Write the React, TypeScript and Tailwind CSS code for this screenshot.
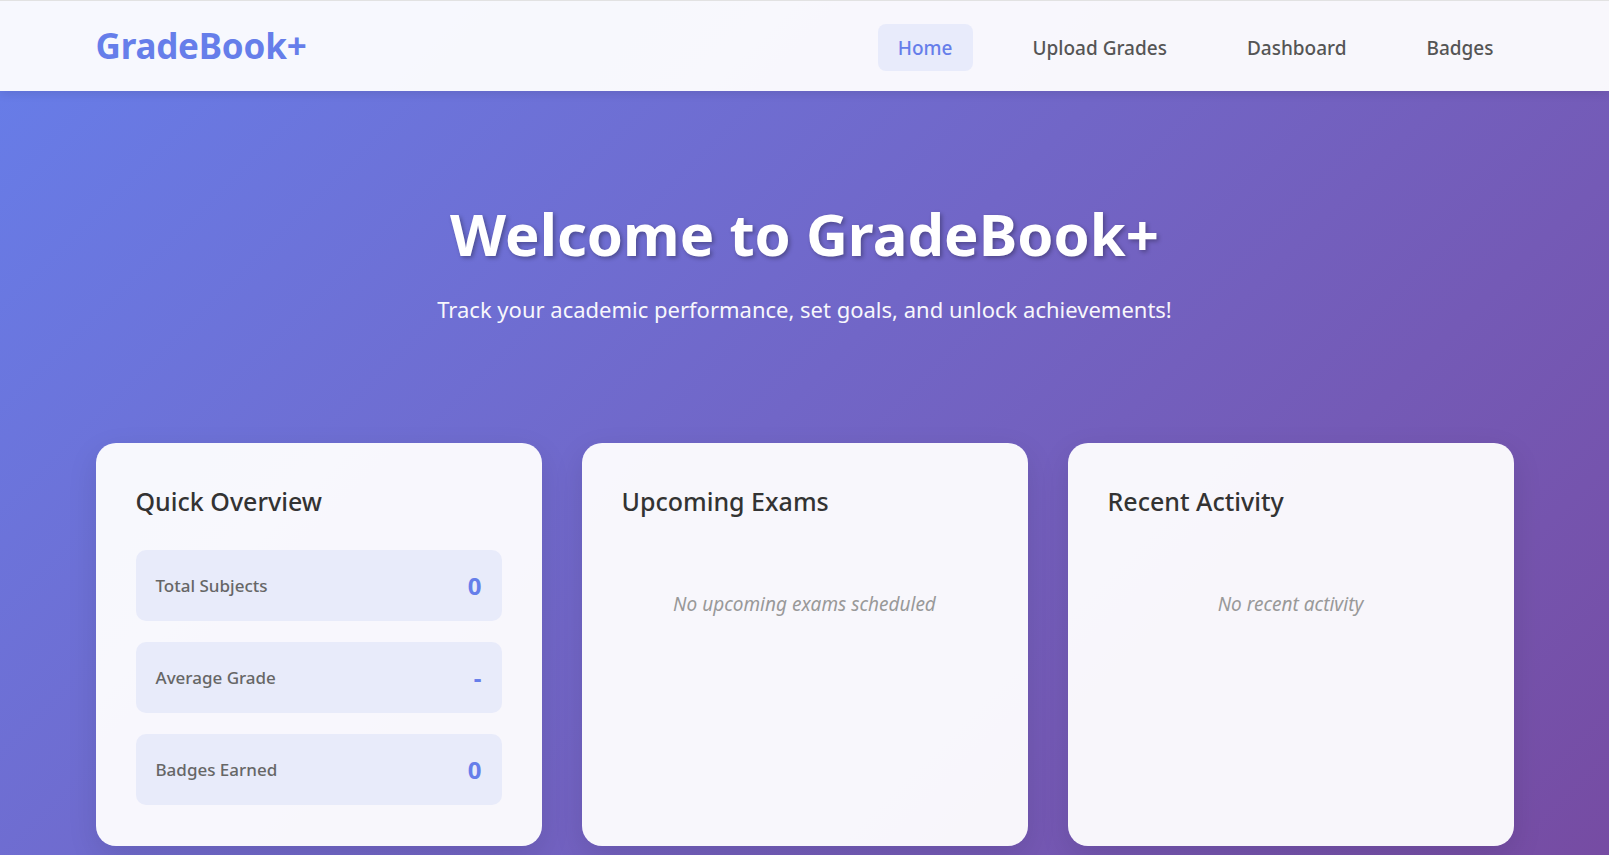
import React from "react";

const font = { fontFamily: '"Noto Sans", "Open Sans", sans-serif' };

const navLinks = ["Home", "Upload Grades", "Dashboard", "Badges"];

const stats = [
  { label: "Total Subjects", value: "0" },
  { label: "Average Grade", value: "-" },
  { label: "Badges Earned", value: "0" },
];

const Card = ({ title, children }: { title: string; children: React.ReactNode }) => (
  <div className="rounded-[20px] bg-white/95 px-10 pt-[40px] pb-[41px] shadow-[0_10px_30px_rgba(0,0,0,0.1)]">
    <h3 className="text-[25px] leading-[36px] font-medium text-[#333] mb-[31px]">{title}</h3>
    {children}
  </div>
);

export default function App() {
  return (
    <div className="min-h-screen bg-linear-135 from-[#667eea] to-[#764ba2]" style={font}>
      <nav className="h-[91px] bg-white/95 border-t border-[#e2e2e2] shadow-[0_2px_10px_rgba(0,0,0,0.1)]">
        <div className="max-w-[1418px] mx-auto h-full flex items-center justify-between">
          <div className="text-[35px] font-bold text-[#667eea] tracking-[-0.2px]">GradeBook+</div>
          <ul className="flex items-center gap-[40px] pt-[2px]">
            {navLinks.map((l, i) => (
              <li key={l}>
                <a
                  className={
                    "block px-[20px] pt-[11px] pb-[9px] rounded-lg text-[19px] leading-[27px] font-medium " +
                    (i === 0 ? "bg-[#e8ebfb] text-[#667eea]" : "text-[#555]")
                  }
                >
                  {l}
                </a>
              </li>
            ))}
          </ul>
        </div>
      </nav>

      <section className="text-center text-white pt-[108px]">
        <h1 className="text-[58px] leading-[70px] font-bold [text-shadow:2px_2px_4px_rgba(0,0,0,0.3)]">
          Welcome to GradeBook+
        </h1>
        <p className="mt-[24px] text-[22px] leading-[32px] opacity-95">
          Track your academic performance, set goals, and unlock achievements!
        </p>
      </section>

      <main className="max-w-[1418px] mx-auto grid grid-cols-3 gap-10 mt-[118px] pb-10">
        <Card title="Quick Overview">
          <div className="flex flex-col gap-[21px]">
            {stats.map((s) => (
              <div key={s.label} className="h-[71px] rounded-[10px] bg-[#e8ebfa] px-5 flex items-center justify-between">
                <span className="text-[17px] font-medium text-[#666]">{s.label}</span>
                <span className="text-[24px] font-bold text-[#667eea]">{s.value}</span>
              </div>
            ))}
          </div>
        </Card>
        <Card title="Upcoming Exams">
          <p className="text-center italic text-[#999] text-[19px] pt-[40px]">No upcoming exams scheduled</p>
        </Card>
        <Card title="Recent Activity">
          <p className="text-center italic text-[#999] text-[19px] pt-[40px]">No recent activity</p>
        </Card>
      </main>
    </div>
  );
}
